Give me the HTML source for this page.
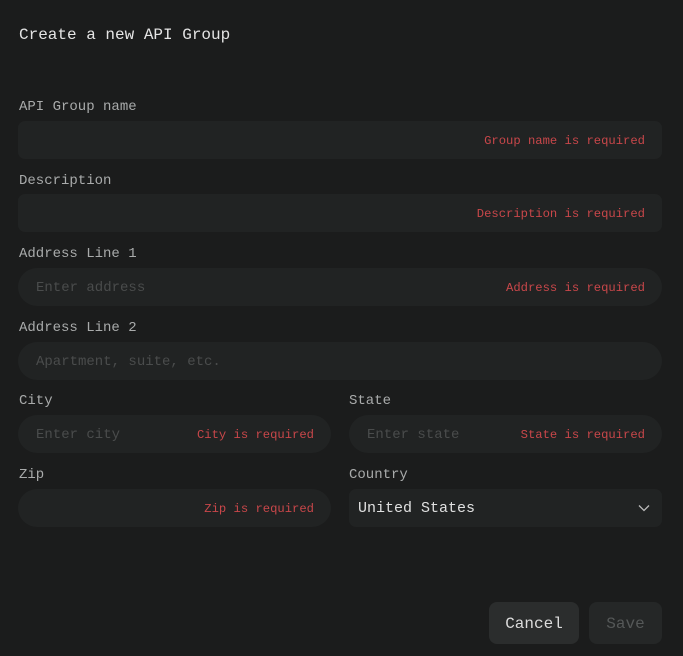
<!DOCTYPE html>
<html><head><style>
body{margin:0;width:683px;height:656px;background:#1b1c1c;font-family:"Liberation Mono",monospace;overflow:hidden;position:relative}
.t{position:absolute;left:19px;top:26px;font-size:16px;color:#e4e4e4}
.l{position:absolute;font-size:14px;color:#a9abab;margin-top:2px}
.i{position:absolute;height:38px;background:#212323;border-radius:19px}
.i.s{border-radius:7px}
.e{position:absolute;right:17px;top:13px;font-size:12.2px;color:#c9474a}
.p{position:absolute;left:18px;top:12px;font-size:14px;color:#4a4c4c}
.b{position:absolute;top:602px;height:42px;border-radius:8px;font-size:16px;text-align:center;line-height:44px}
</style></head><body>
<div class="t">Create a new API Group</div>
<div class="l" style="left:19px;top:97px">API Group name</div>
<div class="i s" style="left:18px;top:121px;width:644px"><span class="e">Group name is required</span></div>
<div class="l" style="left:19px;top:171px">Description</div>
<div class="i s" style="left:18px;top:194px;width:644px"><span class="e">Description is required</span></div>
<div class="l" style="left:19px;top:244px">Address Line 1</div>
<div class="i" style="left:18px;top:268px;width:644px"><span class="p">Enter address</span><span class="e">Address is required</span></div>
<div class="l" style="left:19px;top:318px">Address Line 2</div>
<div class="i" style="left:18px;top:342px;width:644px"><span class="p">Apartment, suite, etc.</span></div>
<div class="l" style="left:19px;top:391px">City</div>
<div class="i" style="left:18px;top:415px;width:313px"><span class="p">Enter city</span><span class="e">City is required</span></div>
<div class="l" style="left:349px;top:391px">State</div>
<div class="i" style="left:349px;top:415px;width:313px"><span class="p">Enter state</span><span class="e">State is required</span></div>
<div class="l" style="left:19px;top:465px">Zip</div>
<div class="i" style="left:18px;top:489px;width:313px"><span class="e">Zip is required</span></div>
<div class="l" style="left:349px;top:465px">Country</div>
<div class="i s" style="left:349px;top:489px;width:313px"><span style="position:absolute;left:9px;top:11px;font-size:15px;color:#e0e0e0">United States</span>
<svg style="position:absolute;right:12px;top:15px" width="12" height="8" viewBox="0 0 12 8"><path d="M1 1.5l5 5 5-5" fill="none" stroke="#bbb" stroke-width="1.3"/></svg></div>
<div class="b" style="left:489px;width:90px;background:#2b2d2d;color:#dcdcdc">Cancel</div>
<div class="b" style="left:589px;width:73px;background:#252727;color:#555858">Save</div>
</body></html>
